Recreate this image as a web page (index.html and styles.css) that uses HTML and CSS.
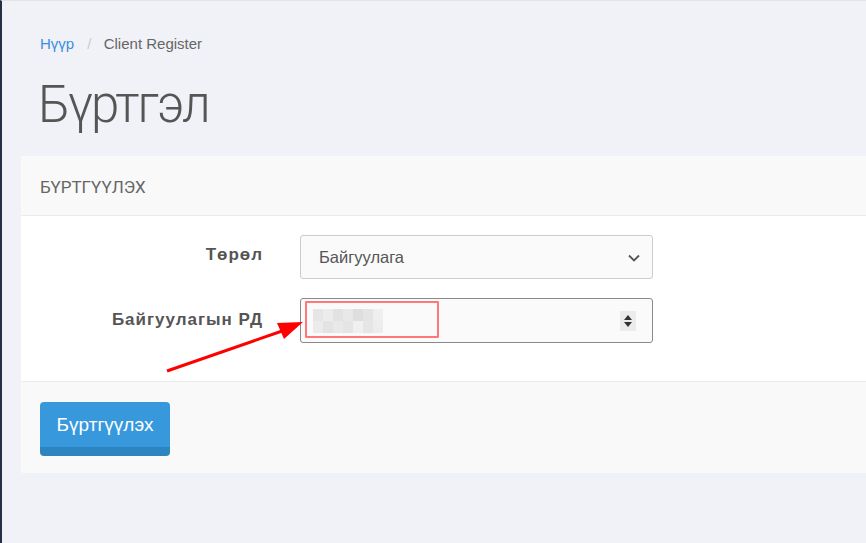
FILE: index.html
```html
<!DOCTYPE html>
<html>
<head>
  <meta charset="utf-8">
  <title>Client Register</title>
  <link rel="stylesheet" href="styles.css">
</head>
<body>
  <div class="page">
    <div class="breadcrumb">
      <a href="#">Нүүр</a>
      <span class="sep">/</span>
      <span class="current">Client Register</span>
    </div>

    <h1 class="page-title">Бүртгэл</h1>

    <div class="panel">
      <div class="panel-heading">БҮРТГҮҮЛЭХ</div>
      <div class="panel-body">
        <div class="form-row">
          <label>Төрөл</label>
          <div class="field select-field">
            <span>Байгуулага</span>
            <svg class="chevron" width="12" height="8" viewBox="0 0 12 8"><path d="M1 1.5l5 5 5-5" fill="none" stroke="#555" stroke-width="1.8"/></svg>
          </div>
        </div>
        <div class="form-row">
          <label>Байгуулагын РД</label>
          <div class="field number-field">
            <div class="blur">
              <i style="background:#e6e6e6"></i><i style="background:#ececec"></i><i style="background:#e2e2e2"></i><i style="background:#e8e8e8"></i><i style="background:#dedede"></i><i style="background:#e4e4e4"></i><i style="background:#efefef"></i>
              <i style="background:#ebebeb"></i><i style="background:#e3e3e3"></i><i style="background:#e9e9e9"></i><i style="background:#e5e5e5"></i><i style="background:#f0f0f0"></i><i style="background:#e6e6e6"></i><i style="background:#ededed"></i>
            </div>
            <span class="spinner">
              <svg width="10" height="14" viewBox="0 0 10 14"><path d="M5 1l4 5H1z M5 13l4-5H1z" fill="#333"/></svg>
            </span>
            <span class="highlight"></span>
          </div>
        </div>
      </div>
      <div class="panel-footer">
        <button class="btn btn-primary">Бүртгүүлэх</button>
      </div>
    </div>
  </div>

  <svg class="arrow" width="866" height="543" viewBox="0 0 866 543">
    <line x1="167" y1="371" x2="285" y2="330" stroke="#f00" stroke-width="3"/>
    <polygon points="303,322 277,323 284,339" fill="#f00"/>
  </svg>
</body>
</html>
```

FILE: styles.css
```css
html, body {
  margin: 0;
  height: 100%;
}
body {
  background-color: #f0f2f7;
  border-left: 2px solid #253142;
  border-top: 1px solid #e2e4e8;
  box-sizing: border-box;
  font-family: "Liberation Sans", Arial, sans-serif;
  overflow: hidden;
  position: relative;
}
.page {
  padding: 0 0 0 19px;
}
.breadcrumb {
  padding: 34px 0 0 19px;
  font-size: 15px;
  line-height: 17px;
  color: #666;
}
.breadcrumb a {
  color: #3a8fe0;
  text-decoration: none;
}
.breadcrumb .sep {
  color: #ccc;
  margin: 0 8px 0 9px;
}
.page-title {
  margin: 22px 0 0 17px;
  font-family: Roboto, sans-serif;
  font-weight: 300;
  font-size: 51px;
  letter-spacing: -2px;
  line-height: 61px;
  color: #555;
}
.panel {
  margin-top: 21px;
  margin-right: -6px;
  background-color: white;
  border-radius: 3px;
}
.panel-heading {
  height: 59px;
  padding-left: 19px;
  background-color: #f9f9f9;
  border-bottom: 1px solid #ececec;
  border-radius: 3px 3px 0 0;
  font-family: Roboto, sans-serif;
  font-size: 17px;
  line-height: 62px;
  color: #666;
}
.panel-body {
  padding: 19px 0 38px 19px;
  display: flex;
  flex-direction: column;
  gap: 19px;
}
.form-row {
  display: flex;
  align-items: flex-start;
}
.form-row label {
  width: 223px;
  margin-right: 37px;
  text-align: right;
  font-size: 17px;
  font-weight: bold;
  letter-spacing: 1px;
  color: #555;
  padding-top: 10px;
}
.form-row + .form-row label {
  padding-top: 12px;
}
.field {
  width: 353px;
  box-sizing: border-box;
  border: 1px solid #ccc;
  border-radius: 3px;
  background-color: #fafafa;
  display: flex;
  align-items: center;
  position: relative;
}
.select-field {
  height: 44px;
  padding: 0 12px 0 18px;
  justify-content: space-between;
  font-size: 16.5px;
  color: #555;
}
.chevron {
  margin-top: 2px;
}
.number-field {
  height: 45px;
  border-color: #8a8a8a;
  padding: 0 16px 0 12px;
  justify-content: space-between;
}
.blur {
  display: grid;
  grid-template-columns: repeat(7, 10px);
  grid-auto-rows: 12px;
}
.blur i {
  display: block;
}
.spinner {
  width: 16px;
  height: 20px;
  background-color: #ececec;
  display: flex;
  align-items: center;
  justify-content: center;
}
.highlight {
  position: absolute;
  left: 4px;
  top: 2px;
  width: 134px;
  height: 37px;
  box-sizing: border-box;
  border: 2px solid #f77;
  border-radius: 1px;
}
.panel-footer {
  padding: 20px 19px 17px;
  background-color: #f9f9f9;
  border-top: 1px solid #ececec;
  border-radius: 0 0 3px 3px;
}
.btn {
  border: none;
  border-radius: 4px;
  cursor: pointer;
  font-family: "Liberation Sans", Arial, sans-serif;
}
.btn-primary {
  width: 130px;
  height: 54px;
  background-color: #3799dc;
  border-bottom: 9px solid #2c84c1;
  color: white;
  font-size: 19px;
  padding: 0;
}
.arrow {
  position: absolute;
  left: -2px;
  top: -1px;
  pointer-events: none;
}
```
